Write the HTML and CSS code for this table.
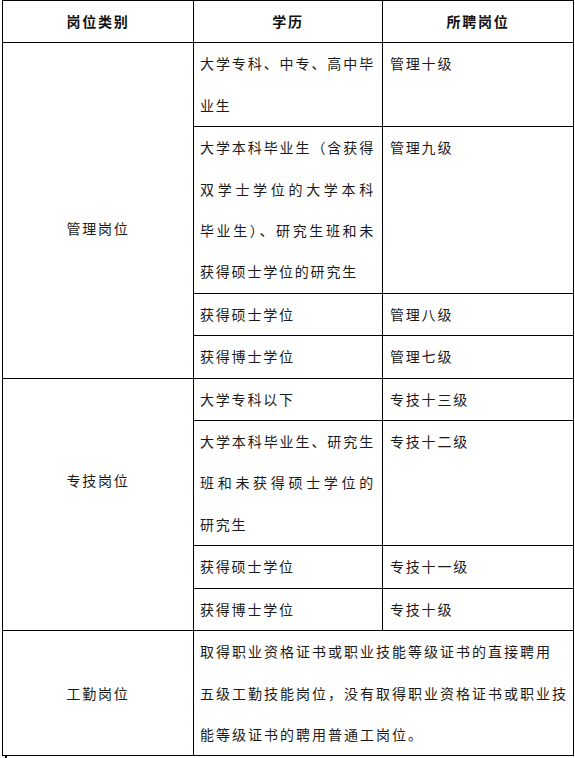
FILE: index.html
```html
<!DOCTYPE html>
<html lang="zh-CN">
<head>
<meta charset="utf-8">
<title>岗位类别</title>
<link rel="stylesheet" href="styles.css">
</head>
<body>
<table class="grid">
  <colgroup>
    <col class="c1">
    <col class="c2">
    <col class="c3">
  </colgroup>
  <tr>
    <th>岗位类别</th>
    <th>学历</th>
    <th>所聘岗位</th>
  </tr>
  <tr>
    <td rowspan="4" class="cat cat-mgmt">管理岗位</td>
    <td class="edu"><span class="jl">大学专科、中专、高中毕</span>业生</td>
    <td class="post">管理十级</td>
  </tr>
  <tr>
    <td class="edu"><span class="jl">大学本科毕业生（含获得</span><span class="jl">双学士学位的大学本科</span><span class="jl">毕业生）、研究生班和未</span>获得硕士学位的研究生</td>
    <td class="post">管理九级</td>
  </tr>
  <tr>
    <td class="edu">获得硕士学位</td>
    <td class="post">管理八级</td>
  </tr>
  <tr>
    <td class="edu">获得博士学位</td>
    <td class="post">管理七级</td>
  </tr>
  <tr>
    <td rowspan="4" class="cat cat-tech">专技岗位</td>
    <td class="edu">大学专科以下</td>
    <td class="post">专技十三级</td>
  </tr>
  <tr>
    <td class="edu"><span class="jl">大学本科毕业生、研究生</span><span class="jl">班和未获得硕士学位的</span>研究生</td>
    <td class="post">专技十二级</td>
  </tr>
  <tr>
    <td class="edu">获得硕士学位</td>
    <td class="post">专技十一级</td>
  </tr>
  <tr>
    <td class="edu">获得博士学位</td>
    <td class="post">专技十级</td>
  </tr>
  <tr>
    <td class="cat cat-work">工勤岗位</td>
    <td colspan="2" class="wide">取得职业资格证书或职业技能等级证书的直接聘用<br>五级工勤技能岗位，没有取得职业资格证书或职业技<br>能等级证书的聘用普通工岗位。</td>
  </tr>
</table>
<div class="mark"></div>
</body>
</html>
```

FILE: styles.css
```css
html, body {
  margin: 0;
  padding: 0;
  background: #ffffff;
}

body {
  font-family: "Noto Sans CJK SC", "Noto Sans", sans-serif;
  font-size: 14px;
  color: #1a1a1a;
}

.grid {
  border-collapse: collapse;
  table-layout: fixed;
  width: 571px;
  margin-left: 2px;
}

.c1 { width: 191px; }
.c2 { width: 189px; }
.c3 { width: 191px; }

.grid th,
.grid td {
  border: 1px solid #000;
  padding: 0;
  line-height: 41.4px;
  letter-spacing: 1.8px;
  vertical-align: top;
}

.grid th {
  font-weight: 700;
  text-align: center;
  color: #111;
}

.cat {
  text-align: center;
}

.cat-mgmt {
  padding-top: 165px !important;
}

.cat-tech {
  padding-top: 81px !important;
}

.cat-work {
  vertical-align: middle !important;
}

.edu {
  padding: 0 7px 0 6px !important;
  text-align: left;
}

.jl {
  display: block;
  text-align: justify;
  text-align-last: justify;
}

.post {
  padding-left: 7px !important;
}

.wide {
  padding-left: 6px !important;
  white-space: nowrap;
  letter-spacing: 2px !important;
}

.mark {
  width: 2px;
  height: 3px;
  margin-left: 5px;
  background: #000;
}
```
